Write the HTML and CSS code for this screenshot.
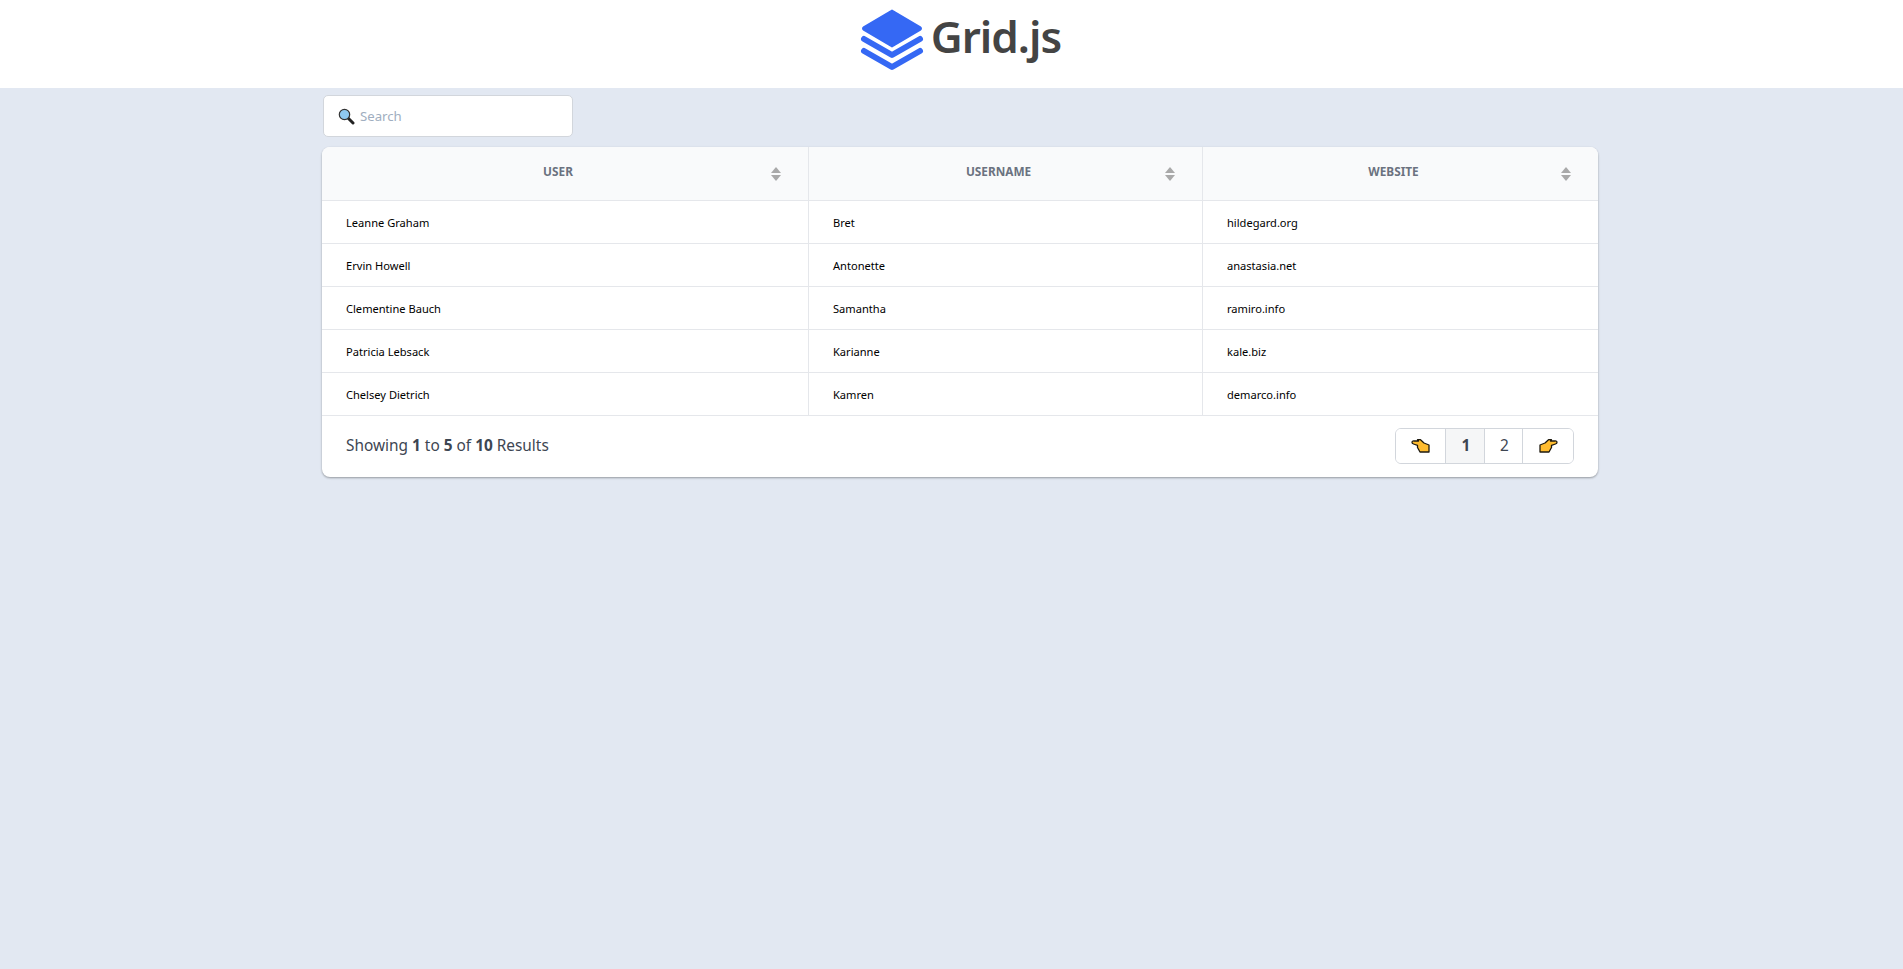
FILE: index.html
```html
<!DOCTYPE html>
<html lang="en">
<head>
<meta charset="utf-8">
<title>Grid.js</title>
<link rel="stylesheet" href="styles.css">
</head>
<body>
<header class="top">
  <svg class="logo" width="64" height="62" viewBox="0 0 64 62">
    <path d="M32 1.5 L60 18 Q62 19.5 60 21 L32 37.5 L4 21 Q2 19.5 4 18 Z" fill="#3568f4" stroke="#3568f4" stroke-width="2" stroke-linejoin="round"/>
    <path d="M4 30 L32 46 L60 30" fill="none" stroke="#3568f4" stroke-width="6" stroke-linecap="round" stroke-linejoin="round"/>
    <path d="M4 42 L32 58 L60 42" fill="none" stroke="#3568f4" stroke-width="6" stroke-linecap="round" stroke-linejoin="round"/>
  </svg>
  <span class="brand">Grid.js</span>
</header>
<main class="wrap">
  <div class="search">
    <svg class="emoji" width="17" height="17" viewBox="0 0 17 17">
      <path d="M10 10 L15 15" stroke="#222" stroke-width="3" stroke-linecap="round"/>
      <circle cx="6.5" cy="6.5" r="5.2" fill="#8ec8f0" stroke="#333" stroke-width="1.2"/>
    </svg>
    <span class="placeholder">Search</span>
  </div>
  <div class="card">
    <table class="grid">
      <colgroup><col class="c1"><col class="c2"><col class="c3"></colgroup>
      <thead>
        <tr>
          <th><div class="th-in"><span class="th-label">USER</span><span class="sort"></span></div></th>
          <th><div class="th-in"><span class="th-label">USERNAME</span><span class="sort"></span></div></th>
          <th><div class="th-in"><span class="th-label">WEBSITE</span><span class="sort"></span></div></th>
        </tr>
      </thead>
      <tbody>
        <tr><td>Leanne Graham</td><td>Bret</td><td>hildegard.org</td></tr>
        <tr><td>Ervin Howell</td><td>Antonette</td><td>anastasia.net</td></tr>
        <tr><td>Clementine Bauch</td><td>Samantha</td><td>ramiro.info</td></tr>
        <tr><td>Patricia Lebsack</td><td>Karianne</td><td>kale.biz</td></tr>
        <tr><td>Chelsey Dietrich</td><td>Kamren</td><td>demarco.info</td></tr>
      </tbody>
    </table>
    <div class="foot">
      <div class="summary">Showing <b>1</b> to <b>5</b> of <b>10</b> Results</div>
      <div class="pages">
        <button class="pg pg-hand">
          <svg width="19" height="14" viewBox="0 0 19 14"><path d="M1 3.2 Q1 1.8 3 2 L7.5 2 L6.5 .7 L9.5 .7 L13 4 L18 6 L18 13 L9 13 L6.5 8.5 L6.5 6.3 L2.5 5 Q1 4.5 1 3.2 Z" fill="#ffbc2f" stroke="#1e1a10" stroke-width="1.3" stroke-linejoin="round"/></svg>
        </button>
        <button class="pg pg-num pg-first current">1</button>
        <button class="pg pg-num">2</button>
        <button class="pg pg-hand">
          <svg width="19" height="14" viewBox="0 0 19 14"><path d="M18 3.2 Q18 1.8 16 2 L11.5 2 L12.5 .7 L9.5 .7 L6 4 L1 6 L1 13 L10 13 L12.5 8.5 L12.5 6.3 L16.5 5 Q18 4.5 18 3.2 Z" fill="#ffbc2f" stroke="#1e1a10" stroke-width="1.3" stroke-linejoin="round"/></svg>
        </button>
      </div>
    </div>
  </div>
</main>
</body>
</html>
```
FILE: styles.css
```css
* { box-sizing: border-box; }
html, body { margin: 0; padding: 0; }
body { min-height: 100vh; background: #e2e8f2; font-family: "Noto Sans", "Open Sans", sans-serif; }
.top { height: 88px; background: #fff; display: flex; align-items: center; justify-content: center; gap: 7px; padding: 0 0 8px 18px; }
.logo { display: block; }
.brand { font-size: 44px; font-weight: 600; color: #444; letter-spacing: -1px; line-height: 1; margin-bottom: 9px; }
.wrap { width: 1276px; margin-left: 322px; padding-top: 7px; }
.search { width: 250px; height: 42px; margin-left: 1px; background: #fff; border: 1px solid #d2d6dc; border-radius: 5px; display: flex; align-items: center; gap: 5px; padding-left: 14px; }
.emoji { display: block; }
.placeholder { font-size: 13.2px; color: #a0aec0; }
.card { margin-top: 10px; background: #fff; border-radius: 8px; box-shadow: 0 1px 3px 0 rgba(0,0,0,.1), 0 1px 2px 0 rgba(0,0,0,.26); overflow: hidden; }
.grid { width: 100%; border-collapse: separate; border-spacing: 0; table-layout: fixed; }
.c1 { width: 487px; }
.c2 { width: 394px; }
.c3 { width: 395px; }
th { height: 54px; background: #f9fafb; border-bottom: 1px solid #e5e7eb; border-right: 1px solid #e5e7eb; padding: 0; }
th:last-child, td:last-child { border-right: 0; }
.th-in { display: flex; align-items: center; justify-content: center; position: relative; height: 53px; padding: 0 14px 3px 0; }
.th-label { font-size: 11.8px; font-weight: 700; color: #6b7280; line-height: 1; }
.sort { position: absolute; right: 27px; top: 20px; width: 10px; height: 14px; }
.sort::before, .sort::after { content: ""; position: absolute; left: 0; border-left: 5px solid transparent; border-right: 5px solid transparent; }
.sort::before { top: 0; border-bottom: 6px solid #a9a9a9; }
.sort::after { bottom: 0; border-top: 6px solid #a9a9a9; }
td { height: 43px; padding: 0 24px; font-size: 11.1px; color: #000; border-bottom: 1px solid #e5e7eb; border-right: 1px solid #e5e7eb; }
.foot { height: 61px; display: flex; align-items: center; justify-content: space-between; padding: 0 24px 2px; }
.summary { font-size: 15.4px; color: #3d4652; }
.summary b { font-weight: 700; }
.pages { display: flex; height: 36px; border: 1px solid #d2d6dc; border-radius: 6px; overflow: hidden; }
.pg { border: 0; border-right: 1px solid #d2d6dc; background: #fff; padding: 0; font-family: inherit; font-size: 15.4px; color: #3d4652; display: flex; align-items: center; justify-content: center; }
.pg:last-child { border-right: 0; }
.pg-hand { width: 50px; }
.pg-num { width: 38px; padding-left: 2px; }
.pg-first { width: 39px; }
.current { background: #f5f6f7; font-weight: 700; }
```
